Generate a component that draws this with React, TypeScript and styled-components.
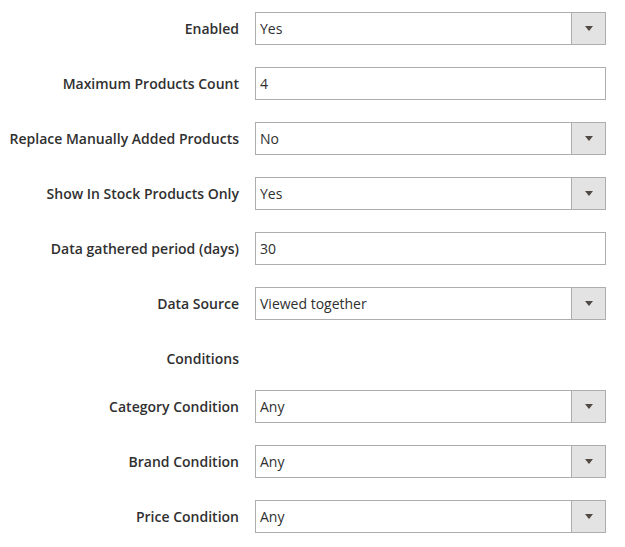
import React from "react";
import styled, { createGlobalStyle } from "styled-components";

const Global = createGlobalStyle`
  html, body { margin: 0; padding: 0; background: #ffffff; }
  body { font-family: "Open Sans", "Noto Sans", sans-serif; color: #303030; }
`;

const Form = styled.div`
  display: grid;
  grid-template-columns: 240px 351px;
  column-gap: 15px;
  padding-top: 12px;
  width: 606px;
`;

const Row = styled.div<{ $top?: number; $bottom?: number }>`
  display: contents;
`;

const Label = styled.label<{ $mt: number }>`
  grid-column: 1;
  margin-top: ${(p) => p.$mt}px;
  height: 33px;
  display: flex;
  align-items: center;
  justify-content: flex-end;
  padding-right: 1px;
  font-size: 14px;
  font-weight: 600;
  color: #303030;
  white-space: nowrap;
`;

const Field = styled.div<{ $mt: number }>`
  grid-column: 2;
  margin-top: ${(p) => p.$mt}px;
  height: 33px;
  box-sizing: border-box;
  border: 1px solid #adadad;
  display: flex;
  align-items: stretch;
  background: #fff;
`;

const Value = styled.div`
  flex: 1;
  display: flex;
  align-items: center;
  padding-left: 4px;
  font-size: 14px;
  color: #303030;
`;

const ArrowBox = styled.div`
  width: 33px;
  border-left: 1px solid #adadad;
  background: #e3e3e3;
  display: flex;
  align-items: center;
  justify-content: center;
`;

const Arrow = styled.span`
  width: 0;
  height: 0;
  border-left: 4px solid transparent;
  border-right: 4px solid transparent;
  border-top: 5px solid #514943;
  margin-left: 1px;
`;

type Item = { label: string; value?: string; select?: boolean; mt: number; noField?: boolean };

const items: Item[] = [
  { label: "Enabled", value: "Yes", select: true, mt: 0 },
  { label: "Maximum Products Count", value: "4", mt: 22 },
  { label: "Replace Manually Added Products", value: "No", select: true, mt: 22 },
  { label: "Show In Stock Products Only", value: "Yes", select: true, mt: 22 },
  { label: "Data gathered period (days)", value: "30", mt: 22 },
  { label: "Data Source", value: "Viewed together", select: true, mt: 22 },
  { label: "Conditions", mt: 22, noField: true },
  { label: "Category Condition", value: "Any", select: true, mt: 15 },
  { label: "Brand Condition", value: "Any", select: true, mt: 22 },
  { label: "Price Condition", value: "Any", select: true, mt: 22 },
];

export default function App() {
  return (
    <>
      <Global />
      <Form>
        {items.map((it) => (
          <Row key={it.label}>
            <Label $mt={it.mt}>{it.label}</Label>
            {it.noField ? (
              <div style={{ gridColumn: 2 }} />
            ) : (
              <Field $mt={it.mt}>
                <Value>{it.value}</Value>
                {it.select && (
                  <ArrowBox>
                    <Arrow />
                  </ArrowBox>
                )}
              </Field>
            )}
          </Row>
        ))}
      </Form>
    </>
  );
}
